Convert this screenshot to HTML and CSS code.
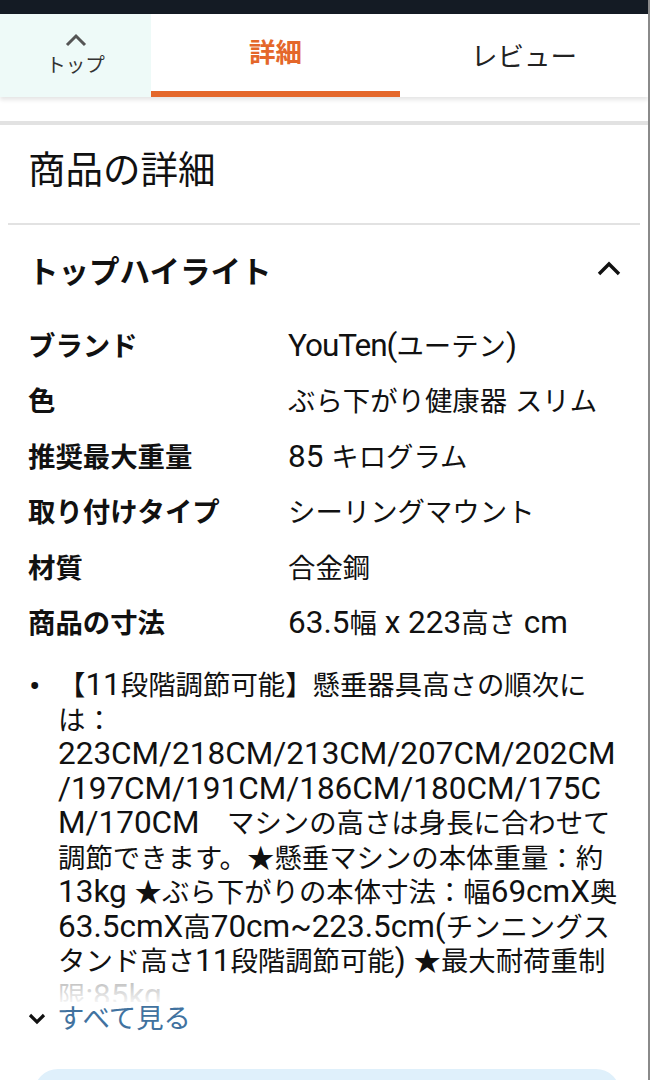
FILE: index.html
```html
<!DOCTYPE html>
<html lang="ja">
<head>
<meta charset="utf-8">
<title>商品の詳細</title>
<link rel="stylesheet" href="styles.css">
</head>
<body>
<div class="page">
  <div class="statusbar"></div>
  <nav class="tabs">
    <div class="tab-top">
      <svg class="tab-top-icon" viewBox="0 0 24 14" width="24" height="14"><path d="M3 12 L12 3 L21 12" fill="none" stroke="#555" stroke-width="3"/></svg>
      <span class="tab-top-label">トップ</span>
    </div>
    <div class="tab tab-active">詳細</div>
    <div class="tab">レビュー</div>
  </nav>
  <div class="spacer"></div>
  <main class="content">
    <h1 class="title">商品の詳細</h1>
    <hr class="divider">
    <div class="section-head">
      <h2 class="section-title">トップハイライト</h2>
      <svg class="chevron-up" viewBox="0 0 26 16" width="26" height="16"><path d="M3 14 L13 4 L23 14" fill="none" stroke="#111" stroke-width="3.4"/></svg>
    </div>
    <div class="specs">
      <div class="spec-row"><div class="spec-label">ブランド</div><div class="spec-value"><span class="lt lt-tight">YouTen(</span>ユーテン<span class="lt">)</span></div></div>
      <div class="spec-row"><div class="spec-label">色</div><div class="spec-value">ぶら下がり健康器<span class="lt"> </span>スリム</div></div>
      <div class="spec-row"><div class="spec-label">推奨最大重量</div><div class="spec-value"><span class="lt">85 </span>キログラム</div></div>
      <div class="spec-row"><div class="spec-label">取り付けタイプ</div><div class="spec-value">シーリングマウント</div></div>
      <div class="spec-row"><div class="spec-label">材質</div><div class="spec-value">合金鋼</div></div>
      <div class="spec-row"><div class="spec-label">商品の寸法</div><div class="spec-value"><span class="lt">63.5</span>幅<span class="lt"> x 223</span>高さ<span class="lt"> cm</span></div></div>
    </div>
    <div class="bullets-wrap">
      <ul class="bullets">
        <li><span class="dot">•</span><span class="txt">【<span class="lt">11</span>段階調節可能】懸垂器具高さの順次に<br>は：<br><span class="lt">223CM/218CM/213CM/207CM/202CM<br>/197CM/191CM/186CM/180CM/175C<br>M/170CM</span>　マシンの高さは身長に合わせて<br>調節できます。★懸垂マシンの本体重量：約<br><span class="lt">13kg </span>★ぶら下がりの本体寸法：幅<span class="lt">69cmX</span>奥<br><span class="lt">63.5cmX</span>高<span class="lt">70cm~223.5cm(</span>チンニングス<br>タンド高さ<span class="lt">11</span>段階調節可能<span class="lt">) </span>★最大耐荷重制<br>限<span class="lt">:85kg</span></span></li>
      </ul>
      <div class="fade"></div>
    </div>
    <a class="see-all" href="#">
      <svg class="chevron-down" viewBox="0 0 18 12" width="18" height="12"><path d="M2 2 L9 9 L16 2" fill="none" stroke="#111" stroke-width="3.2"/></svg>
      <span>すべて見る</span>
    </a>
    <div class="blue-box"></div>
  </main>
</div>
</body>
</html>
```
FILE: styles.css
```css
* { box-sizing: border-box; }
html, body { margin: 0; padding: 0; background: #fff; }
body {
  font-family: "Roboto", "Noto Sans CJK JP", sans-serif;
  color: #111;
  width: 650px;
  height: 1080px;
  overflow: hidden;
}
.page {
  width: 650px;
  height: 1080px;
  border-right: 2px solid #8a8a8a;
  overflow: hidden;
}
.statusbar {
  height: 14px;
  background: #141b24;
}
.tabs {
  display: flex;
  height: 83px;
  box-shadow: 0 3px 4px rgba(0,0,0,0.10);
  position: relative;
  z-index: 1;
}
.tab-top {
  width: 151px;
  background: #eefaf8;
  display: flex;
  flex-direction: column;
  align-items: center;
  padding-top: 19px;
}
.tab-top-icon { display: block; }
.tab-top-label {
  font-size: 19.5px;
  line-height: 22px;
  color: #333;
  margin-top: 8px;
}
.tab {
  flex: 1;
  display: flex;
  align-items: center;
  justify-content: center;
  font-size: 26.5px;
  color: #222;
  padding-bottom: 2px;
}
.tab-active {
  flex: 0 0 249px;
  color: #e4672a;
  font-weight: 700;
  border-bottom: 6px solid #e4672a;
  padding-bottom: 4px;
}
.lt {
  font-size: 1.15em;
  line-height: 1;
}
.lt-tight {
  letter-spacing: -1px;
}
.spacer {
  height: 28px;
  border-bottom: 4px solid #e2e2e2;
}
.content {
  padding: 0 0 0 28px;
}
.title {
  margin: 0;
  padding-top: 23px;
  font-size: 37.5px;
  line-height: 44px;
  font-weight: 400;
  color: #111;
}
.divider {
  margin: 31px 8px 0 -20px;
  border: 0;
  height: 2px;
  background: #e2e2e2;
}
.section-head {
  display: flex;
  align-items: center;
  justify-content: space-between;
  margin-top: 30px;
  padding-right: 26px;
}
.section-title {
  margin: 0;
  font-size: 30.5px;
  line-height: 36px;
  font-weight: 700;
}
.chevron-up { display: block; margin-top: -10px; }
.specs {
  margin-top: 25px;
}
.spec-row {
  display: flex;
  height: 55.5px;
  align-items: center;
  font-size: 27.4px;
}
.spec-label {
  width: 260px;
  font-weight: 700;
}
.spec-value {
  font-weight: 400;
}
.bullets-wrap {
  position: relative;
  height: 333px;
  overflow: hidden;
  margin-top: 20px;
}
.bullets {
  margin: 0;
  padding: 0 4px 0 0;
  list-style: none;
  font-size: 27.4px;
  line-height: 34.5px;
}
.bullets li {
  display: grid;
  grid-template-columns: 30px minmax(0, 1fr);
}
.dot {
  font-size: 34px;
  line-height: 34.5px;
  color: #111;
  padding-left: 1px;
}
.fade {
  position: absolute;
  left: 0; right: 0; bottom: 0;
  height: 22px;
  background: linear-gradient(to bottom, rgba(255,255,255,0.72), rgba(255,255,255,0.95));
}
.see-all {
  display: flex;
  align-items: center;
  gap: 11px;
  text-decoration: none;
  color: #41729f;
  font-size: 27.4px;
  line-height: 34px;
}
.chevron-down { display: block; }
.blue-box {
  margin: 33px 28px 0 6px;
  height: 80px;
  background: #dff0fb;
  border-radius: 24px;
}
```
